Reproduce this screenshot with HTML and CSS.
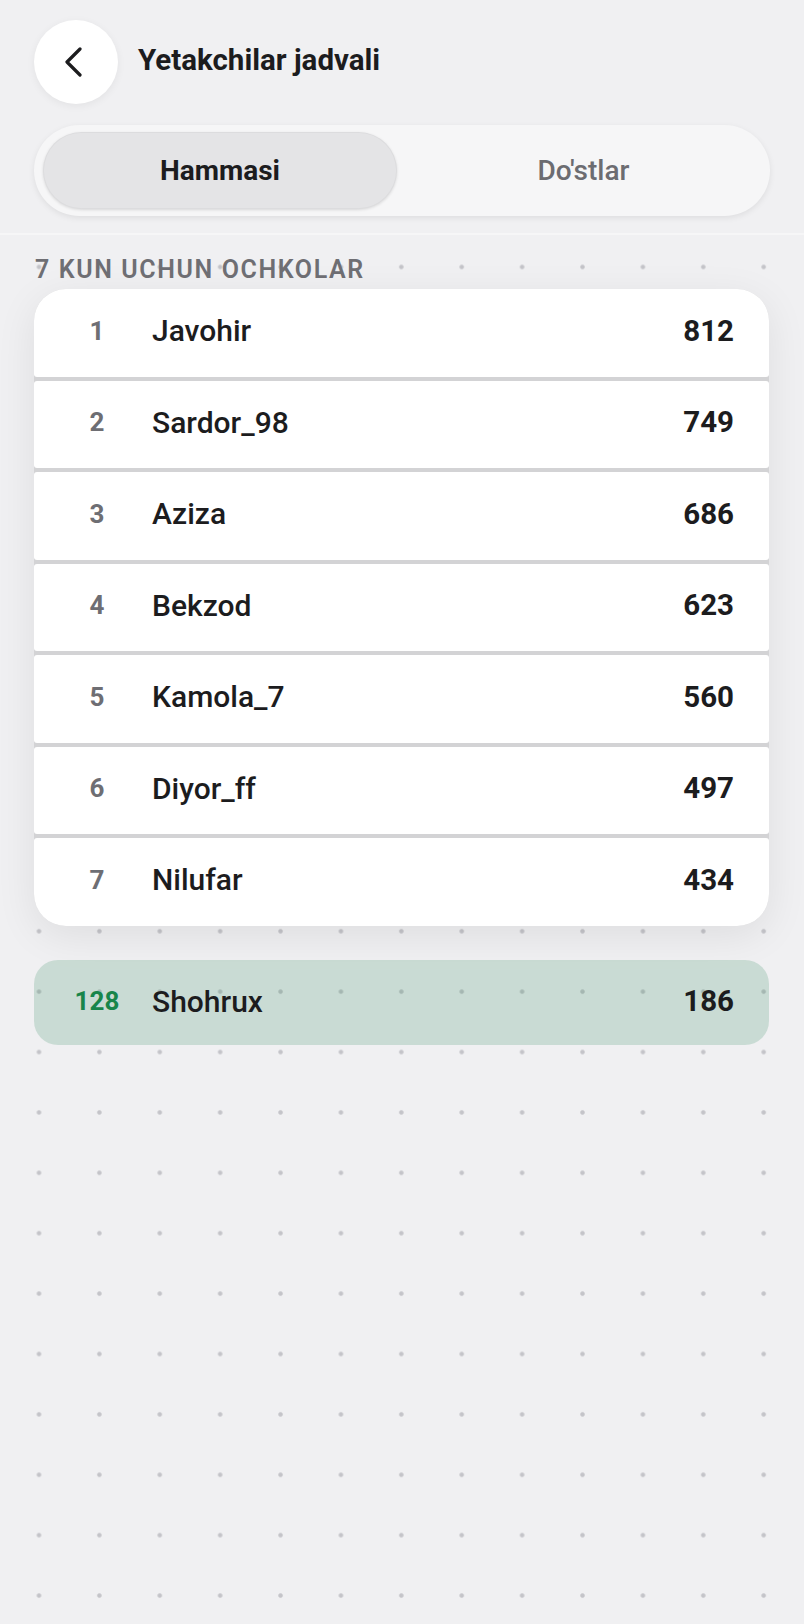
FILE: index.html
```html
<!DOCTYPE html>
<html lang="uz">
<head>
<meta charset="utf-8">
<title>Yetakchilar jadvali</title>
<link rel="stylesheet" href="styles.css">
</head>
<body>
<header class="header">
  <div class="topbar">
    <button class="back" aria-label="Orqaga">
      <svg width="20" height="30" viewBox="0 0 20 30"><path d="M16 2 L3 15 L16 28" fill="none" stroke="#1c1c1e" stroke-width="3.2" stroke-linecap="round" stroke-linejoin="round"/></svg>
    </button>
    <h1 class="title">Yetakchilar jadvali</h1>
  </div>
  <div class="segmented">
    <div class="tab active">Hammasi</div>
    <div class="tab">Do'stlar</div>
  </div>
</header>
<main class="main">
  <div class="label">7 KUN UCHUN OCHKOLAR</div>
  <div class="board">
    <div class="row"><span class="rank">1</span><span class="name">Javohir</span><span class="pts">812</span></div>
    <div class="row"><span class="rank">2</span><span class="name">Sardor_98</span><span class="pts">749</span></div>
    <div class="row"><span class="rank">3</span><span class="name">Aziza</span><span class="pts">686</span></div>
    <div class="row"><span class="rank">4</span><span class="name">Bekzod</span><span class="pts">623</span></div>
    <div class="row"><span class="rank">5</span><span class="name">Kamola_7</span><span class="pts">560</span></div>
    <div class="row"><span class="rank">6</span><span class="name">Diyor_ff</span><span class="pts">497</span></div>
    <div class="row"><span class="rank">7</span><span class="name">Nilufar</span><span class="pts">434</span></div>
  </div>
  <div class="row me"><span class="rank">128</span><span class="name">Shohrux</span><span class="pts">186</span></div>
</main>
</body>
</html>
```
FILE: styles.css
```css
* { box-sizing: border-box; }
html, body { margin: 0; padding: 0; }
body {
  width: 804px;
  min-height: 1624px;
  font-family: Roboto, "Noto Sans", "Liberation Sans", sans-serif;
  color: #1c1c1e;
  background-color: #f0f0f2;
  background-image: radial-gradient(circle, #c4c4c9 1.7px, rgba(196,196,201,0) 2.8px);
  background-size: 60.4px 60.4px;
  background-position: 8.8px -4.8px;
}
.header {
  background: #f0f0f2;
  padding: 20px 34px 17px;
  border-bottom: 2px solid #f6f6f7;
}
.topbar {
  display: flex;
  align-items: center;
  gap: 20px;
  height: 84px;
}
.back {
  width: 84px;
  height: 84px;
  border-radius: 50%;
  border: none;
  background: #ffffff;
  box-shadow: 0 2px 8px rgba(0,0,0,0.06);
  display: flex;
  align-items: center;
  justify-content: center;
  padding: 0 4px 0 0;
  margin: 0;
}
.title {
  margin: 0 0 4px;
  font-size: 29.5px;
  font-weight: 700;
  letter-spacing: 0;
  color: #1c1c1e;
}
.segmented {
  margin-top: 21px;
  height: 91px;
  border-radius: 46px;
  background: #f6f6f7;
  box-shadow: 0 2px 6px rgba(0,0,0,0.08);
  padding: 7px 0 7px 9px;
  display: flex;
}
.tab {
  flex: 1;
  display: flex;
  align-items: center;
  justify-content: center;
  border-radius: 39px;
  font-size: 28px;
  font-weight: 500;
  color: #6c6c71;
}
.tab.active {
  flex: 0 0 354px;
  background: #e4e4e6;
  color: #1c1c1e;
  font-weight: 700;
  box-shadow: 0 1px 3px rgba(0,0,0,0.12), inset 0 0 0 1px rgba(0,0,0,0.03);
}
.main {
  padding: 20px 35px 0 34px;
}
.label {
  font-size: 25px;
  line-height: 30px;
  font-weight: 600;
  letter-spacing: 1.6px;
  color: #6e6e73;
  padding-left: 1px;
}
.board {
  margin-top: 4px;
  border-radius: 32px;
  overflow: hidden;
  background: #d3d3d5;
  display: flex;
  flex-direction: column;
  gap: 4px;
  box-shadow: 0 10px 40px rgba(0,0,0,0.08);
}
.row {
  height: 87.5px;
  background: #ffffff;
  border-radius: 3px;
  display: flex;
  align-items: center;
  padding: 0 35px 4px 36px;
}
.rank {
  width: 54px;
  text-align: center;
  font-size: 26px;
  font-weight: 700;
  color: #6e6e73;
}
.name {
  flex: 1;
  margin-left: 28px;
  font-size: 30px;
  font-weight: 500;
  color: #1c1c1e;
}
.pts {
  font-size: 29.5px;
  font-weight: 700;
  color: #1c1c1e;
}
.row.me {
  margin-top: 34px;
  height: 85px;
  border-radius: 24px;
  background: rgba(26,128,80,0.18);
  padding-bottom: 2px;
}
.row.me .rank {
  color: #18854a;
}
```
